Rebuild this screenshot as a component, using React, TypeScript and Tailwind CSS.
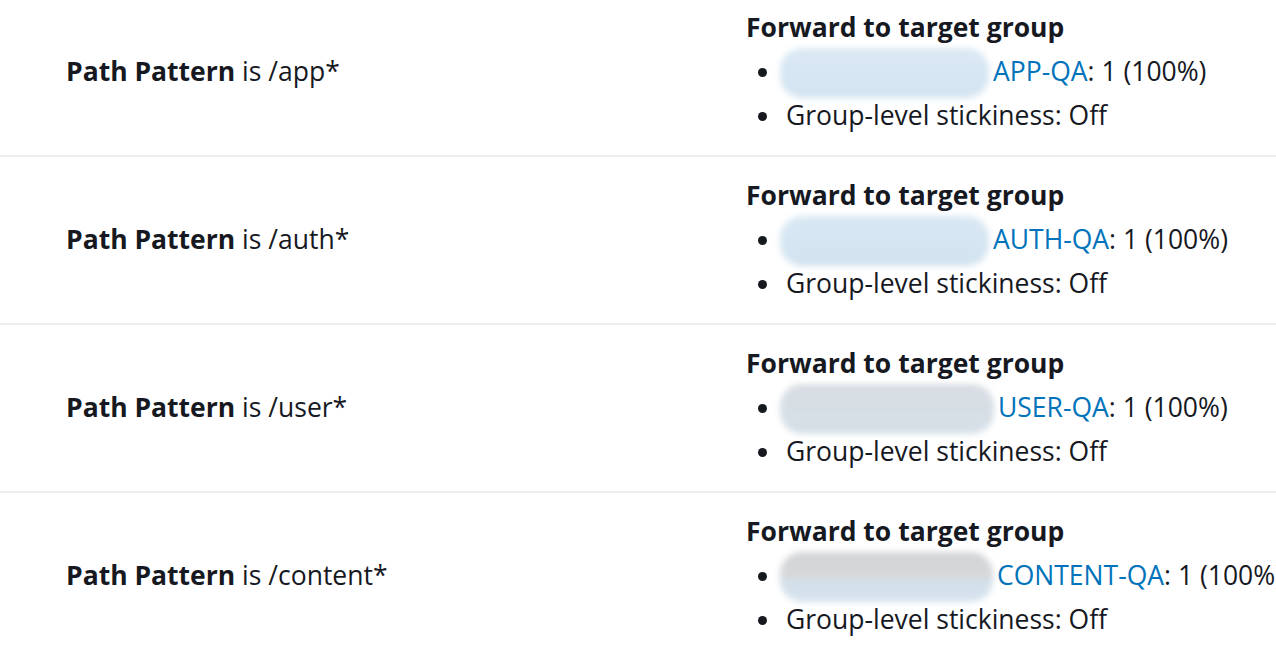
import * as React from "react";

type Rule = {
    path: string;
    group: string;
    blob: string; // tint of the redaction smear over the group-name prefix
    prefix: number; // width of the hidden part of the group name
};

const rules: Rule[] = [
    { path: "/app*", group: "APP-QA", blob: "bg-[linear-gradient(180deg,#dbe9f4,#d3e4f1)]", prefix: 207 },
    { path: "/auth*", group: "AUTH-QA", blob: "bg-[linear-gradient(180deg,#d9e8f3,#d2e3f0)]", prefix: 207 },
    { path: "/user*", group: "USER-QA", blob: "bg-[linear-gradient(180deg,#d7dde2,#d6e0e8)]", prefix: 212 },
    { path: "/content*", group: "CONTENT-QA", blob: "bg-[linear-gradient(180deg,#d3d4d6_0%,#d6d8da_45%,#d3e0ea_60%,#d6e3ee_100%)]", prefix: 211 },
];

function Bullet({ children }: { children: React.ReactNode }) {
    return (
        <li className="flex h-[44px] items-center">
            <span className="ml-[12px] mr-[19px] h-[9px] w-[9px] shrink-0 rounded-full bg-[#16191f]" />
            {children}
        </li>
    );
}

function RuleRow({ rule }: { rule: Rule }) {
    return (
        <div className="flex h-[168px] items-center border-b-2 border-[#ececec]">
            <div className="w-[746px] shrink-0 pl-[66px] text-[26.5px] text-[#16191f]">
                <span className="font-bold">Path Pattern</span> is {rule.path}
            </div>
            <div className="flex flex-col text-[26.5px] text-[#16191f]">
                <div className="flex h-[44px] items-center font-bold">Forward to target group</div>
                <ul>
                    <Bullet>
                        <span className="whitespace-nowrap">
                            <span className="relative inline-block h-[1em] align-middle" style={{ width: rule.prefix }}>
                                <span
                                    className={`absolute -left-[6px] -top-[13px] h-[50px] rounded-[22px] blur-[3px] ${rule.blob}`}
                                    style={{ width: rule.prefix + 2 }}
                                />
                            </span>
                            <a className="text-[#0073bb]">{rule.group}</a>: 1 (100%)
                        </span>
                    </Bullet>
                    <Bullet>Group-level stickiness: Off</Bullet>
                </ul>
            </div>
        </div>
    );
}

export default function App() {
    return (
        <div className="h-[658px] w-[1276px] overflow-hidden bg-white font-['Open_Sans',sans-serif]">
            <div className="-mt-[11px]">
                {rules.map((r) => (
                    <RuleRow key={r.path} rule={r} />
                ))}
            </div>
        </div>
    );
}
